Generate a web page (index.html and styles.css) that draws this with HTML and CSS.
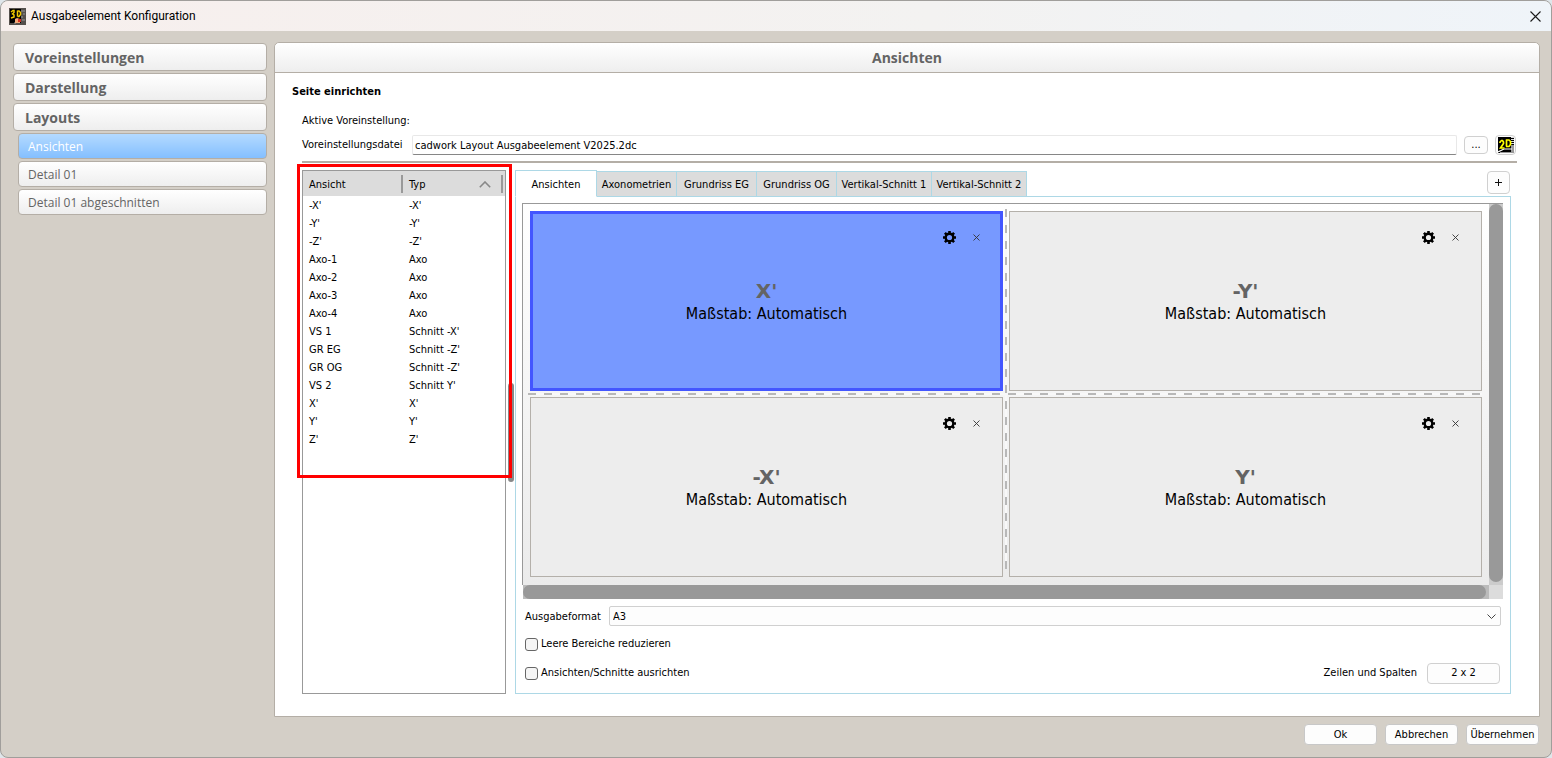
FILE: index.html
```html
<!DOCTYPE html>
<html lang="de">
<head>
<meta charset="utf-8">
<title>Ausgabeelement Konfiguration</title>
<link rel="stylesheet" href="styles.css">
</head>
<body>
<div class="window">
  <header class="titlebar">
    <svg class="app-icon" width="17" height="17" viewBox="0 0 17 17" aria-hidden="true">
      <rect width="17" height="17" fill="#55504c"/>
      <rect x="1" y="1" width="11" height="14" fill="#000"/>
      <path d="M12 3h4M14 6h2M12 9h2M13 12h3M5 15h2" stroke="#999"/>
      <path d="M2 4l2-1.500h1v2L3.500 6 5 7v2L2 10M8.500 2.500v6M8.500 3h1.500l1.500 1.500v2L10 8.500H8.500" fill="none" stroke="#f0c800" stroke-width="1.500"/>
      <path d="M6 11l2-1 3 1v4H6z" fill="#f0a878"/>
      <path d="M9 11h3v3H9z" fill="#d83020"/>
    </svg>
    <h1 class="title">Ausgabeelement Konfiguration</h1>
    <button class="close" type="button" aria-label="Schließen">
      <svg width="11" height="11" viewBox="0 0 11 11"><path d="M.5.5l10 10M10.500.5l-10 10" stroke="#1a1a1a" stroke-width="1.100"/></svg>
    </button>
  </header>

  <div class="workspace">
    <nav class="sidebar">
      <button class="nav-main" type="button">Voreinstellungen</button>
      <button class="nav-main" type="button">Darstellung</button>
      <button class="nav-main" type="button">Layouts</button>
      <button class="nav-sub active" type="button">Ansichten</button>
      <button class="nav-sub" type="button">Detail 01</button>
      <button class="nav-sub" type="button">Detail 01 abgeschnitten</button>
    </nav>

    <main class="panel">
      <h2 class="panel-head">Ansichten</h2>
      <div class="panel-body">
        <h3 class="section">Seite einrichten</h3>
        <p class="preset">Aktive Voreinstellung:</p>
        <div class="file-row">
          <label for="file">Voreinstellungsdatei</label>
          <input id="file" class="file-input" type="text" value="cadwork Layout Ausgabeelement V2025.2dc">
          <button class="btn browse" type="button" aria-label="Durchsuchen">...</button>
          <button class="btn open2d" type="button" aria-label="2D öffnen">
            <svg width="16" height="16" viewBox="0 0 16 16">
              <rect width="16" height="16" fill="#000"/>
              <path d="M13 8h3v8H2v-1h11z" fill="#999"/>
              <path d="M14.500 0v8" stroke="#ddd" stroke-width="3" stroke-dasharray="1 1"/>
              <path d="M0 15l6-3h8" fill="none" stroke="#fff" stroke-width="1.200"/>
              <path d="M2 6V5l1.500-1.500h1L5.500 5v1.500L2.500 11H6.500M8.500 2.500v7M8 3h3l1.500 1.500v3L11 9.500H8" fill="none" stroke="#ff0" stroke-width="1.700"/>
            </svg>
          </button>
        </div>
        <hr class="rule">

        <div class="split">
          <section class="list">
            <table class="views">
              <thead><tr><th scope="col">Ansicht</th><th scope="col">Typ<svg class="sort" width="12" height="7" viewBox="0 0 12 7"><path d="M.8 6.200L6 1l5.200 5.200" fill="none" stroke="#888" stroke-width="1.600"/></svg></th></tr></thead>
              <tbody>
                <tr><td>-X'</td><td>-X'</td></tr>
                <tr><td>-Y'</td><td>-Y'</td></tr>
                <tr><td>-Z'</td><td>-Z'</td></tr>
                <tr><td>Axo-1</td><td>Axo</td></tr>
                <tr><td>Axo-2</td><td>Axo</td></tr>
                <tr><td>Axo-3</td><td>Axo</td></tr>
                <tr><td>Axo-4</td><td>Axo</td></tr>
                <tr><td>VS 1</td><td>Schnitt -X'</td></tr>
                <tr><td>GR EG</td><td>Schnitt -Z'</td></tr>
                <tr><td>GR OG</td><td>Schnitt -Z'</td></tr>
                <tr><td>VS 2</td><td>Schnitt Y'</td></tr>
                <tr><td>X'</td><td>X'</td></tr>
                <tr><td>Y'</td><td>Y'</td></tr>
                <tr><td>Z'</td><td>Z'</td></tr>
              </tbody>
            </table>
            <span class="grip"></span>
            <span class="highlight"></span>
          </section>

          <section class="layout">
            <div class="tab-row">
              <div class="tabs" role="tablist">
                <button class="tab current" role="tab" aria-selected="true" type="button">Ansichten</button>
                <button class="tab" role="tab" type="button">Axonometrien</button>
                <button class="tab" role="tab" type="button">Grundriss EG</button>
                <button class="tab" role="tab" type="button">Grundriss OG</button>
                <button class="tab wide" role="tab" type="button">Vertikal-Schnitt 1</button>
                <button class="tab wide" role="tab" type="button">Vertikal-Schnitt 2</button>
              </div>
              <button class="btn add" type="button" aria-label="Hinzufügen"><svg width="7" height="7" viewBox="0 0 7 7"><path d="M3.500 0v7M0 3.500h7" stroke="#111"/></svg></button>
            </div>
            <div class="pane">
              <div class="sheet">
                <div class="cells">
                  <article class="cell selected">
                    <div class="tools"><button class="tool" type="button" aria-label="Einstellungen"><svg width="13" height="13" viewBox="0 0 13 13"><use href="#gear"/></svg></button><button class="tool" type="button" aria-label="Entfernen"><svg width="7" height="7" viewBox="0 0 7 7"><use href="#cross"/></svg></button></div>
                    <h4>X'</h4><p>Maßstab: Automatisch</p>
                  </article>
                  <span class="dash-v"></span>
                  <article class="cell">
                    <div class="tools"><button class="tool" type="button" aria-label="Einstellungen"><svg width="13" height="13" viewBox="0 0 13 13"><use href="#gear"/></svg></button><button class="tool" type="button" aria-label="Entfernen"><svg width="7" height="7" viewBox="0 0 7 7"><use href="#cross"/></svg></button></div>
                    <h4>-Y'</h4><p>Maßstab: Automatisch</p>
                  </article>
                  <span class="dash-h"></span>
                  <article class="cell">
                    <div class="tools"><button class="tool" type="button" aria-label="Einstellungen"><svg width="13" height="13" viewBox="0 0 13 13"><use href="#gear"/></svg></button><button class="tool" type="button" aria-label="Entfernen"><svg width="7" height="7" viewBox="0 0 7 7"><use href="#cross"/></svg></button></div>
                    <h4>-X'</h4><p>Maßstab: Automatisch</p>
                  </article>
                  <article class="cell last">
                    <div class="tools"><button class="tool" type="button" aria-label="Einstellungen"><svg width="13" height="13" viewBox="0 0 13 13"><use href="#gear"/></svg></button><button class="tool" type="button" aria-label="Entfernen"><svg width="7" height="7" viewBox="0 0 7 7"><use href="#cross"/></svg></button></div>
                    <h4>Y'</h4><p>Maßstab: Automatisch</p>
                  </article>
                </div>
                <div class="bar-v"><span></span></div>
                <div class="bar-h"><span></span></div>
                <div class="bar-corner"></div>
              </div>
              <div class="format">
                <label for="format">Ausgabeformat</label>
                <div class="select-wrap">
                  <select id="format"><option>A3</option></select>
                  <svg class="caret" width="9" height="5" viewBox="0 0 9 5"><path d="M.5.5l4 4 4-4" fill="none" stroke="#444"/></svg>
                </div>
              </div>
              <div class="option"><input id="reduce" type="checkbox"><label for="reduce">Leere Bereiche reduzieren</label></div>
              <div class="option">
                <input id="align" type="checkbox"><label for="align">Ansichten/Schnitte ausrichten</label>
                <label class="matrix-label" for="matrix">Zeilen und Spalten</label>
                <button id="matrix" class="btn matrix" type="button">2 x 2</button>
              </div>
            </div>
          </section>
        </div>
      </div>
    </main>
  </div>

  <footer class="actions">
    <button class="action" type="button">Ok</button>
    <button class="action" type="button">Abbrechen</button>
    <button class="action" type="button">Übernehmen</button>
  </footer>
</div>

<svg class="defs" width="0" height="0" aria-hidden="true">
  <g id="gear">
    <circle cx="6.500" cy="6.500" r="3.800" fill="none" stroke="#000" stroke-width="2.400"/>
    <path d="M6.500 0v2.500M6.500 10.500V13M0 6.500h2.500M10.500 6.500H13M1.900 1.900l1.800 1.800M9.300 9.300l1.800 1.800M1.900 11.100l1.800-1.800M9.300 3.700l1.800-1.800" stroke="#000" stroke-width="2.600"/>
  </g>
  <path id="cross" d="M.5.5l6 6M6.500.5l-6 6" stroke="#333" stroke-width=".9"/>
</svg>
</body>
</html>
```

FILE: styles.css
```css
* { box-sizing: border-box; }

html { background: #dfe6ea; }

body {
  margin: 0;
  font: 11px/14px "DejaVu Sans Condensed", "DejaVu Sans", sans-serif;
  color: #000;
}

button, input, select { font: inherit; color: inherit; margin: 0; }
h1, h2, h3, h4, p { margin: 0; }

.window {
  display: flex;
  flex-direction: column;
  min-height: 100vh;
  border: 1px solid #a09e9b;
  border-radius: 8px;
  background: #d4cfc7;
  overflow: hidden;
}

.titlebar {
  display: flex;
  align-items: center;
  gap: 5px;
  height: 30px;
  padding: 0 10px 0 8px;
  background: linear-gradient(90deg, #f7efed, #f3f2f1 60%, #eff4f9);
}
.title { flex: 1; font: 400 12px/16px Roboto, sans-serif; }
.close { display: flex; padding: 0; border: 0; background: none; }

.workspace { flex: 1; display: flex; gap: 7px; padding: 11px 11px 0 12px; }

.sidebar {
  display: flex;
  flex-direction: column;
  gap: 2px;
  width: 254px;
  padding-top: 1px;
  font-family: "Open Sans", sans-serif;
}
.nav-main, .nav-sub {
  border: 1px solid #b4aea6;
  border-radius: 4px;
  background: linear-gradient(#fff, #eee);
  color: #646464;
  text-align: left;
}
.nav-main { height: 28px; padding: 2px 11px 0; font-size: 14px; font-weight: 700; line-height: 20px; }
.nav-sub { height: 26px; margin-left: 5px; padding: 2px 9px 0; font-size: 12px; line-height: 16px; }
.nav-sub.active { background: linear-gradient(#b4daff, #84bfff); color: #fff; }

.panel {
  flex: 1;
  display: flex;
  flex-direction: column;
  min-width: 0;
  border: 1px solid #b4aea6;
  border-radius: 5px 5px 0 0;
  background: #fff;
}
.panel-head {
  height: 30px;
  border-bottom: 1px solid #b4aea6;
  border-radius: 5px 5px 0 0;
  background: linear-gradient(#fff, #eee);
  color: #646464;
  font: 700 14px/30px "Open Sans", sans-serif;
  text-align: center;
}
.panel-body { flex: 1; display: flex; flex-direction: column; padding: 12px 22px 22px 27px; }
.section { margin-left: -10px; font-size: 11px; line-height: 14px; }
.preset { margin-top: 15px; }

.file-row { display: flex; align-items: center; height: 20px; margin-top: 7px; }
.file-row label { width: 110px; }
.file-input {
  flex: 1;
  min-width: 0;
  height: 20px;
  padding: 0 2px;
  border: 1px solid #e8e8e8;
  border-bottom-color: #868686;
  border-radius: 2px;
  background: #fff;
}
.btn {
  display: flex;
  align-items: center;
  justify-content: center;
  padding: 0;
  border: 1px solid #d0d0d0;
  border-radius: 4px;
  background: #fdfdfd;
}
.browse { width: 24px; height: 18px; margin: 0 7px; }
.open2d { width: 21px; height: 20px; margin-right: 1px; }
.rule { width: 100%; height: 2px; margin: 6px 0 7px; border: 0; background: #b4aea6; }

.split { flex: 1; display: flex; gap: 9px; margin-right: 6px; }
.list { position: relative; width: 204px; border: 1px solid #999; }

.views { width: 100%; border-collapse: collapse; table-layout: fixed; }
.views th {
  height: 25px;
  padding: 2px 6px 0;
  background: linear-gradient(#999, #999) right 0 center / 2px 18px no-repeat #dcdcdc;
  font-weight: 400;
  text-align: left;
}
.views th:first-child { width: 100px; }
.views th:last-child { background-position: right 2px center; }
.views td { height: 18px; padding: 2px 6px 0; }
.sort { float: right; margin: 3px 8px 0 0; }

.grip {
  position: absolute;
  top: 212px;
  right: -9px;
  width: 6px;
  height: 99px;
  border-radius: 3px;
  background: #888;
}
.highlight {
  position: absolute;
  top: -7px;
  left: -6px;
  right: -7px;
  height: 314px;
  border: 3px solid #f00;
}

.layout { flex: 1; display: flex; flex-direction: column; min-width: 0; }
.tab-row { display: flex; justify-content: space-between; align-items: flex-start; }
.tabs { display: flex; align-items: flex-end; margin-bottom: -1px; }
.tab {
  width: 80px;
  height: 26px;
  padding: 2px 0 0;
  border: 1px solid #add8e6;
  border-left-width: 0;
  background: #dcdcdc;
  white-space: nowrap;
}
.tab.wide { width: 95px; }
.tab.current {
  position: relative;
  width: 82px;
  height: 27px;
  border-left-width: 1px;
  border-bottom-color: #fff;
  background: #fff;
}
.add { width: 23px; height: 23px; margin: 1px 1px 0 0; }

.pane { flex: 1; display: flex; flex-direction: column; padding: 6px 7px 9px 6px; border: 1px solid #add8e6; }
.sheet {
  flex: 1;
  display: grid;
  grid-template: 1fr 14px / 1fr 14px;
  border-top: 1px solid #999;
}
.cells {
  display: grid;
  grid-template: 1fr 6px 1fr / 1fr 6px 1fr;
  padding: 7px 7px 8px;
  border-left: 1px solid #999;
  background: linear-gradient(#fff, #ebebeb);
}
.cell {
  position: relative;
  display: flex;
  flex-direction: column;
  align-items: center;
  justify-content: center;
  padding-top: 2px;
  border: 1px solid #b4b0aa;
  background: #ededed;
}
.cell.selected { border: 3px solid #4356ff; background: #7799ff; }
.cell.last { grid-column: 3; }
.cell h4 { color: #646464; font: 700 20px/24px "DejaVu Sans", sans-serif; }
.cell p { font: 16px/22px "DejaVu Sans Condensed", sans-serif; }
.tools {
  position: absolute;
  top: 19px;
  right: 22px;
  display: flex;
  align-items: center;
  gap: 17px;
}
.selected .tools { top: 17px; right: 20px; }
.tool { display: flex; padding: 0; border: 0; background: none; }

.dash-v {
  grid-area: 1 / 2 / 4 / 3;
  width: 2px;
  margin: -2px 2px 8px;
  background: repeating-linear-gradient(#b8b8b8 0 8px, #f8f8f8 8px 16px);
}
.dash-h {
  grid-area: 2 / 1 / 3 / 4;
  height: 2px;
  margin: 2px 0 2px -2px;
  background: repeating-linear-gradient(90deg, #b8b8b8 0 8px, #f8f8f8 8px 16px);
}
.bar-v { background: #ccc; }
.bar-h { margin-left: 1px; background: #bbb; }
.bar-v span, .bar-h span { display: block; border-radius: 7px; background: #999; }
.bar-v span { height: calc(100% - 3px); }
.bar-h span { width: calc(100% - 3px); height: 100%; }
.bar-corner { background: #dcdcdc; }

.format { display: flex; align-items: center; margin: 7px 2px 0 3px; }
.format label { width: 84px; padding-top: 2px; }
.select-wrap { position: relative; flex: 1; display: flex; }
.select-wrap select {
  flex: 1;
  height: 20px;
  padding: 2px 3px 0;
  border: 1px solid #d0d0d0;
  border-radius: 2px;
  background: #fdfdfd;
  appearance: none;
}
.caret { position: absolute; right: 5px; top: 8px; pointer-events: none; }

.option { display: flex; align-items: center; gap: 3px; height: 22px; margin: 7px 3px 0; }
.option input {
  width: 13px;
  height: 13px;
  border: 1px solid #666;
  border-radius: 3px;
  background: #f5f5f5;
  appearance: none;
}
.option .matrix-label { margin-left: auto; }
.matrix { width: 73px; height: 21px; margin-left: 7px; }

.actions { display: flex; justify-content: flex-end; gap: 8px; padding: 7px 12px 12px; }
.action {
  width: 73px;
  height: 21px;
  padding: 1px 0 0;
  border: 1px solid #c8c8c8;
  border-radius: 4px;
  background: #fdfdfd;
}
.defs { position: absolute; }
```
